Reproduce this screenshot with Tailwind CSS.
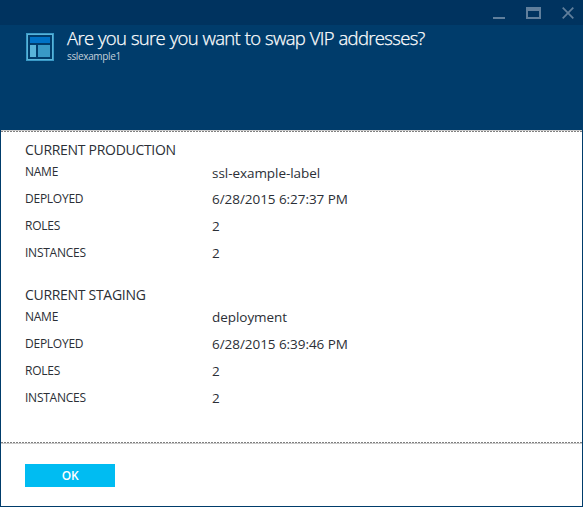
<!DOCTYPE html>
<html lang="en">
<head>
<meta charset="utf-8">
<title>Swap VIP addresses</title>
<script src="https://cdn.jsdelivr.net/npm/@tailwindcss/browser@4"></script>
</head>
<body class="h-[507px] w-[583px] overflow-hidden font-['Open_Sans','Noto_Sans',sans-serif] text-[#2b2f36]">
<main class="flex h-[507px] w-[583px] flex-col border-x border-b border-[#003c6b] bg-white">
  <header class="-mx-px h-[130px] shrink-0 bg-[#003c6b]">
    <div class="flex h-[25px] justify-end bg-[#00335f] pr-[9px] pt-[7px]">
      <svg class="h-3 w-[81px]" viewBox="0 0 81 12" fill="none" stroke="#607f9c" shape-rendering="crispEdges">
        <path d="M6 11H18" stroke-width="2" transform="translate(-6 0)"/>
        <path d="M33 2H48" stroke-width="4"/>
        <path d="M34 4V12M47 4V12M33 11H48" stroke-width="2"/>
        <path d="M69.7 .7L80.3 11.3M80.3 .7L69.7 11.3" stroke-width="1.7" shape-rendering="auto"/>
      </svg>
    </div>
    <div class="flex pl-[26px]">
      <svg class="mt-2 h-7 w-7 shrink-0" viewBox="0 0 28 28" shape-rendering="crispEdges">
        <rect width="28" height="28" fill="#3999c6"/>
        <rect x="1" y="1" width="26" height="26" fill="#59b4d9"/>
        <rect x="2" y="2" width="24" height="24" fill="#003c6b"/>
        <rect x="4" y="4" width="20" height="6" fill="#0072c6"/>
        <rect x="4" y="12" width="6" height="12" fill="#59b4d9"/>
        <rect x="12" y="12" width="12" height="12" fill="#3999c6"/>
      </svg>
      <div class="pl-[13px] whitespace-nowrap">
        <h1 class="h-6 text-[18.5px] leading-[25px] font-light tracking-[-0.68px] [word-spacing:0.5px] [-webkit-text-stroke:0.25px_#fff] text-white">Are you sure you want to swap VIP addresses?</h1>
        <p class="text-[10px] leading-[14px] tracking-[-0.35px] text-[#c3cfda]">sslexample1</p>
      </div>
    </div>
  </header>
  <div class="h-px shrink-0 bg-[#cccccc]"></div>
  <div class="h-px shrink-0 bg-[repeating-linear-gradient(90deg,#808080_0_2px,#fff_2px_3px)]"></div>

  <section class="flex h-[145px] shrink-0 flex-col pl-6 pt-[9px] whitespace-nowrap">
    <h2 class="h-[17px] text-[14px] leading-[18px] tracking-[-0.3px]">CURRENT PRODUCTION</h2>
    <dl class="grid grid-cols-[187px_1fr] auto-rows-[27px] text-[13.5px] leading-[28px] tracking-[-0.05px]">
      <dt class="text-[12px] leading-[27px] tracking-[-0.25px]">NAME</dt><dd class="pt-px">ssl-example-label</dd>
      <dt class="text-[12px] leading-[27px] tracking-[-0.25px]">DEPLOYED</dt><dd>6/28/2015 6:27:37 PM</dd>
      <dt class="text-[12px] leading-[27px] tracking-[-0.25px]">ROLES</dt><dd>2</dd>
      <dt class="text-[12px] leading-[27px] tracking-[-0.25px]">INSTANCES</dt><dd>2</dd>
    </dl>
  </section>
  <section class="flex h-[165px] shrink-0 flex-col pl-6 pt-[9px] whitespace-nowrap">
    <h2 class="h-[17px] text-[14px] leading-[18px] tracking-[-0.3px]">CURRENT STAGING</h2>
    <dl class="grid grid-cols-[187px_1fr] auto-rows-[27px] text-[13.5px] leading-[28px] tracking-[-0.05px]">
      <dt class="text-[12px] leading-[27px] tracking-[-0.25px]">NAME</dt><dd>deployment</dd>
      <dt class="text-[12px] leading-[27px] tracking-[-0.25px]">DEPLOYED</dt><dd>6/28/2015 6:39:46 PM</dd>
      <dt class="text-[12px] leading-[27px] tracking-[-0.25px]">ROLES</dt><dd>2</dd>
      <dt class="text-[12px] leading-[27px] tracking-[-0.25px]">INSTANCES</dt><dd>2</dd>
    </dl>
  </section>

  <div class="h-px shrink-0 bg-[repeating-linear-gradient(90deg,#808080_0_2px,#fff_2px_3px)]"></div>
  <div class="h-px shrink-0 bg-[#cccccc]"></div>
  <footer class="pl-6 pt-5">
    <button class="block h-[23px] w-[90px] bg-[#00bcf2] text-[12px] leading-[24px] font-semibold tracking-[-0.4px] text-white">OK</button>
  </footer>
</main>
</body>
</html>
